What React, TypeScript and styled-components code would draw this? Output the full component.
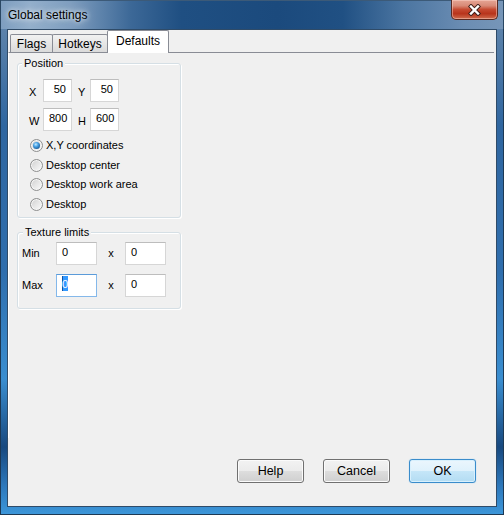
import React from "react";
import styled, { createGlobalStyle, css } from "styled-components";

const GlobalStyle = createGlobalStyle`
  html, body { margin: 0; padding: 0; }
  body { background: #fff; font-family: "Liberation Sans", Arial, sans-serif; }
`;

const Window = styled.div`
  width: 504px;
  height: 515px;
  display: flex;
  flex-direction: column;
  overflow: hidden;
  font-family: "Liberation Sans", Arial, sans-serif;
  color: #000;
`;

const TitleBar = styled.div`
  flex: none;
  height: 29px;
  display: flex;
  justify-content: space-between;
  padding: 0 6px 0 8px;
  background: linear-gradient(
    to right,
    #7d9dbf 0%,
    #93afcb 6%,
    #7f9ebf 14%,
    #3c6897 26%,
    #1f4f82 36%,
    #1b4a7d 55%,
    #205083 68%,
    #4b75a1 80%,
    #6b8db3 92%,
    #7796b8 100%
  );
  box-shadow: inset 1px 0 0 #2a4763, inset -1px 0 0 #2a4763, inset 0 1px 0 #3c5a78;
`;

const Title = styled.div`
  align-self: center;
  padding-top: 1px;
  font-size: 12px;
  line-height: 15px;
  color: #000;
  text-shadow: 0 0 5px rgba(255, 255, 255, 0.9), 0 0 10px rgba(255, 255, 255, 0.7);
`;

const CloseButton = styled.div`
  align-self: flex-start;
  width: 47px;
  height: 20px;
  box-sizing: border-box;
  display: flex;
  align-items: center;
  justify-content: center;
  border: 1px solid #5a2a22;
  border-top: none;
  border-radius: 0 0 5px 5px;
  background: linear-gradient(
    #e6a595 0%,
    #d88a77 30%,
    #c64a31 50%,
    #b8341c 72%,
    #d06e4f 100%
  );
  box-shadow: inset 0 0 0 1px rgba(255, 220, 210, 0.45);
`;

const Body = styled.div`
  flex: 1;
  display: flex;
  padding: 0 7px 8px 7px;
  background: linear-gradient(
    to bottom,
    #5c82aa 0%,
    #2f66a0 20%,
    #2f6ead 50%,
    #3a8ed0 72%,
    #18497f 86%,
    #2d78bb 94%,
    #3d97da 100%
  );
  box-shadow: inset 1px 0 0 #1d3954, inset -1px 0 0 #1d3954, inset 0 -1px 0 #1d3954;
`;

const Client = styled.div`
  flex: 1;
  display: flex;
  flex-direction: column;
  background: #f0f0f0;
  border: 1px solid #2f4b68;
`;

const TabControl = styled.div`
  flex: none;
  height: 408px;
  margin-right: 2px;
  display: flex;
  flex-direction: column;
`;

const TabStrip = styled.div`
  flex: none;
  height: 22px;
  display: flex;
  align-items: flex-end;
  padding-left: 2px;
`;

const Tab = styled.div<{ $w: number; $active?: boolean }>`
  width: ${(p) => p.$w}px;
  box-sizing: border-box;
  margin-left: -1px;
  &:first-child { margin-left: 0; }
  display: flex;
  align-items: center;
  justify-content: center;
  font-size: 12px;
  line-height: 14px;
  border: 1px solid #898c95;
  border-bottom: none;
  border-radius: 2px 2px 0 0;
  ${(p) =>
    p.$active
      ? css`
          height: 23px;
          margin-bottom: -1px;
          padding-bottom: 2px;
          position: relative;
          z-index: 1;
          background: #fff;
        `
      : css`
          height: 18px;
          background: linear-gradient(#f2f2f2 0%, #e6e6e6 50%, #dadada 100%);
        `}
`;

const Panel = styled.div`
  flex: 1;
  display: flex;
  flex-direction: column;
  align-items: flex-start;
  gap: 14px;
  padding: 10px 0 0 8px;
  border-top: 1px solid #898c95;
  border-left: 1px solid #fff;
`;

const Group = styled.div`
  position: relative;
  width: 164px;
  box-sizing: border-box;
  border: 1px solid #d5dfe5;
  border-radius: 3px;
  box-shadow: inset 1px 1px 0 #fff, 1px 1px 0 #fff;
`;

const Legend = styled.span<{ $left: number }>`
  position: absolute;
  top: -7px;
  left: ${(p) => p.$left}px;
  padding: 0 2px;
  background: #f0f0f0;
  font-size: 11px;
  line-height: 13px;
`;

const PositionBody = styled.div`
  display: flex;
  flex-direction: column;
  padding: 15px 0 3px 11px;
`;

const CoordRow = styled.div`
  display: flex;
  align-items: center;
  height: 23px;
  & + & { margin-top: 6px; }
`;

const Label = styled.span<{ $w: number; $center?: boolean; $drop?: number }>`
  width: ${(p) => p.$w}px;
  flex: none;
  font-size: 11px;
  line-height: 13px;
  padding-top: ${(p) => p.$drop ?? 0}px;
  text-align: ${(p) => (p.$center ? "center" : "left")};
`;

const Field = styled.div<{ $w: number; $right?: boolean; $focused?: boolean }>`
  width: ${(p) => p.$w}px;
  height: 23px;
  flex: none;
  box-sizing: border-box;
  background: #fff;
  border: 1px solid #d6d6d6;
  border-top-color: #bdbdbd;
  padding: 3px 5px 0 5px;
  font-size: 11px;
  line-height: 13px;
  text-align: ${(p) => (p.$right ? "right" : "left")};
  ${(p) =>
    p.$focused &&
    css`
      border-color: #84b8ea;
      border-top-color: #5b9bd9;
    `}
`;

const FieldGap = styled.span`
  width: 6px;
  flex: none;
`;

const Selection = styled.span`
  display: inline-block;
  background: #3399ff;
  color: #fff;
  padding-top: 2px;
  margin-top: -2px;
  box-shadow: inset 1px 0 0 #1452a0;
`;

const RadioList = styled.div`
  display: flex;
  flex-direction: column;
  margin-top: 5px;
  margin-left: 1px;
`;

const RadioRow = styled.label`
  height: 19.5px;
  display: flex;
  align-items: center;
  gap: 3px;
  font-size: 11px;
  line-height: 13px;
`;

const RadioDot = styled.span<{ $checked?: boolean }>`
  position: relative;
  width: 13px;
  height: 13px;
  flex: none;
  box-sizing: border-box;
  border-radius: 50%;
  border: 1px solid #8e8f8f;
  background: linear-gradient(135deg, #cdcdcd 0%, #e4e4e4 45%, #fbfbfb 100%);
  box-shadow: inset 0 0 0 1px #f6f6f6;
  ${(p) =>
    p.$checked &&
    css`
      &::after {
        content: "";
        position: absolute;
        left: 2px;
        top: 2px;
        width: 7px;
        height: 7px;
        border-radius: 50%;
        background: radial-gradient(circle at 40% 35%, #c5ecff 0%, #4aa3e6 35%, #1c5f9c 75%, #133f6b 100%);
      }
    `}
`;

const TextureBody = styled.div`
  display: flex;
  flex-direction: column;
  gap: 9px;
  padding: 9px 0 11px 4px;
`;

const LimitRow = styled.div`
  display: flex;
  align-items: center;
  height: 23px;
`;

const ButtonRow = styled.div`
  margin-top: auto;
  display: flex;
  justify-content: flex-end;
  gap: 19px;
  padding: 0 20px 23px 0;
`;

const Button = styled.button<{ $default?: boolean }>`
  width: 67px;
  height: 24px;
  box-sizing: border-box;
  padding: 0;
  font-family: "Liberation Sans", Arial, sans-serif;
  font-size: 12.5px;
  color: #000;
  border-radius: 3px;
  border: 1px solid #707070;
  background: linear-gradient(#f2f2f2 0%, #ebebeb 50%, #dddddd 51%, #cfcfcf 100%);
  box-shadow: inset 0 0 0 1px #fbfbfb;
  ${(p) =>
    p.$default &&
    css`
      border-color: #3a8ccb;
      background: linear-gradient(#ebf6fd 0%, #dff1fc 50%, #c5e6f8 51%, #b3dcf3 100%);
      box-shadow: inset 0 0 0 1px #d8f0fd, 0 0 1px #6ec1f0;
    `}
`;

const CloseGlyph = () => (
  <svg width="13" height="12" viewBox="0 0 13 12">
    <path d="M3 2.5 L10 9.5 M10 2.5 L3 9.5" stroke="#40201a" strokeWidth="4.4" strokeLinecap="square" />
    <path d="M3 2.5 L10 9.5 M10 2.5 L3 9.5" stroke="#ffffff" strokeWidth="2.4" strokeLinecap="square" />
  </svg>
);

const radios = ["X,Y coordinates", "Desktop center", "Desktop work area", "Desktop"];

export default function App() {
  return (
    <>
      <GlobalStyle />
      <Window>
        <TitleBar>
          <Title>Global settings</Title>
          <CloseButton>
            <CloseGlyph />
          </CloseButton>
        </TitleBar>
        <Body>
          <Client>
            <TabControl>
              <TabStrip>
                <Tab $w={43}>Flags</Tab>
                <Tab $w={56}>Hotkeys</Tab>
                <Tab $w={62} $active>
                  Defaults
                </Tab>
              </TabStrip>
              <Panel>
                <Group>
                  <Legend $left={4}>Position</Legend>
                  <PositionBody>
                    <CoordRow>
                      <Label $w={14} $drop={3}>X</Label>
                      <Field $w={29} $right>50</Field>
                      <FieldGap />
                      <Label $w={12} $drop={3}>Y</Label>
                      <Field $w={29} $right>50</Field>
                    </CoordRow>
                    <CoordRow>
                      <Label $w={14} $drop={3}>W</Label>
                      <Field $w={29} $right>800</Field>
                      <FieldGap />
                      <Label $w={12} $drop={3}>H</Label>
                      <Field $w={29} $right>600</Field>
                    </CoordRow>
                    <RadioList>
                      {radios.map((r, i) => (
                        <RadioRow key={r}>
                          <RadioDot $checked={i === 0} />
                          {r}
                        </RadioRow>
                      ))}
                    </RadioList>
                  </PositionBody>
                </Group>
                <Group>
                  <Legend $left={5}>Texture limits</Legend>
                  <TextureBody>
                    <LimitRow>
                      <Label $w={34}>Min</Label>
                      <Field $w={41}>0</Field>
                      <Label $w={28} $center>x</Label>
                      <Field $w={41}>0</Field>
                    </LimitRow>
                    <LimitRow>
                      <Label $w={34}>Max</Label>
                      <Field $w={41} $focused>
                        <Selection>0</Selection>
                      </Field>
                      <Label $w={28} $center>x</Label>
                      <Field $w={41}>0</Field>
                    </LimitRow>
                  </TextureBody>
                </Group>
              </Panel>
            </TabControl>
            <ButtonRow>
              <Button>Help</Button>
              <Button>Cancel</Button>
              <Button $default>OK</Button>
            </ButtonRow>
          </Client>
        </Body>
      </Window>
    </>
  );
}
